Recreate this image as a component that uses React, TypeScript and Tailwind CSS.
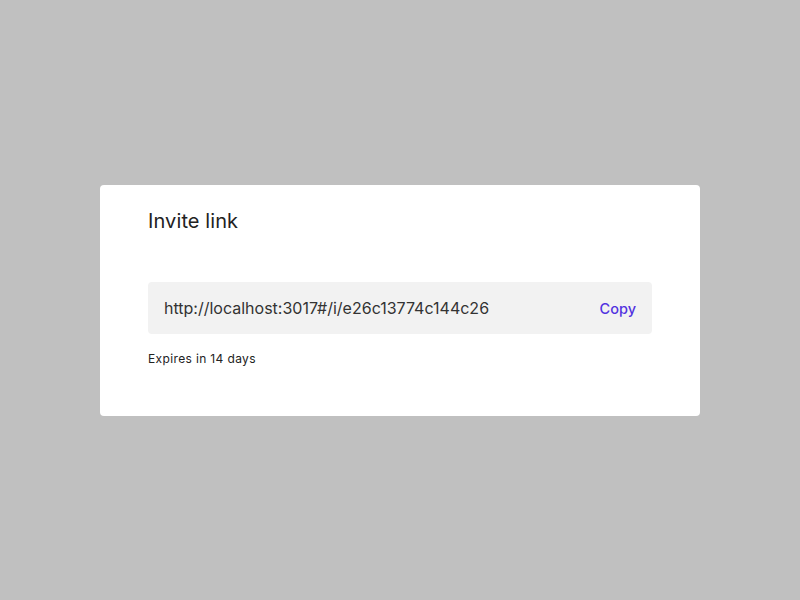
export default function App() {
  return (
    <div
      className="flex h-[600px] w-[800px] items-center justify-center bg-[#c0c0c0]"
      style={{ fontFamily: "Inter, 'Noto Sans', sans-serif" }}
    >
      <div className="h-[231px] w-[600px] rounded-[4px] bg-white px-12 pt-[22px]">
        <h2 className="text-[20px] leading-[28px] tracking-[0.005em] text-[#222]">Invite link</h2>
        <div className="mt-[47px] flex h-[52px] items-center justify-between rounded-[4px] bg-[#f2f2f2] px-4">
          <span className="text-[16px] text-[#333]">
            http://localhost:3017#/i/e26c13774c144c26
          </span>
          <button className="pt-[2px] text-[14.5px] font-medium text-[#5232e0]">Copy</button>
        </div>
        <p className="mt-[17px] text-[12px] leading-[16px] tracking-[0.03em] text-[#222]">Expires in 14 days</p>
      </div>
    </div>
  );
}
